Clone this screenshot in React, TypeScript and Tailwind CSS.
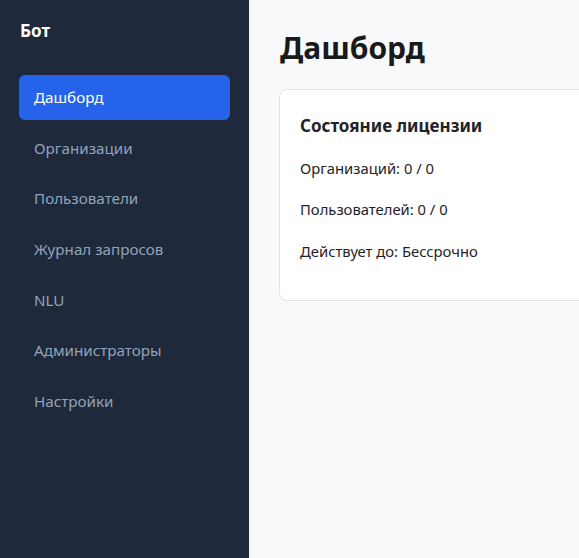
import React from "react";

const items = [
  "Дашборд",
  "Организации",
  "Пользователи",
  "Журнал запросов",
  "NLU",
  "Администраторы",
  "Настройки",
];

export default function App() {
  return (
    <div
      className="flex min-h-screen w-full overflow-hidden"
      style={{ fontFamily: '"Noto Sans", "Open Sans", sans-serif' }}
    >
      <aside className="w-[249px] shrink-0 bg-[#1e293b] min-h-screen pt-5">
        <div className="px-5 text-[17px] leading-[22px] font-bold text-white">Бот</div>
        <nav className="mt-[33px] px-[19px] flex flex-col gap-[5.67px]">
          {items.map((t, i) => (
            <div
              key={t}
              className={
                i === 0
                  ? "h-[45px] flex items-center pl-[15px] rounded-md bg-[#2563eb] text-white text-[15.2px]"
                  : "h-[45px] flex items-center pl-[15px] rounded-md text-[#94a3b8] text-[15.2px]"
              }
            >
              {t}
            </div>
          ))}
        </nav>
      </aside>
      <main className="flex-1 bg-[#f8f9fb] pl-[30px] pt-[30px] min-w-0">
        <h1 className="pl-px text-[30px] leading-[36px] font-bold text-[#1a1a1a]">Дашборд</h1>
        <div className="mt-[23px] w-[420px] bg-white border border-[#e2e4e8] rounded-lg pt-[23px] pb-[36px] px-5 flex flex-col gap-[16.5px] text-[#1f2329]">
          <div className="text-[17px] leading-[26px] font-bold">Состояние лицензии</div>
          <div className="text-[14.8px] leading-[25px]">Организаций: 0 / 0</div>
          <div className="text-[14.8px] leading-[25px]">Пользователей: 0 / 0</div>
          <div className="text-[14.8px] leading-[25px]">Действует до: Бессрочно</div>
        </div>
      </main>
    </div>
  );
}
